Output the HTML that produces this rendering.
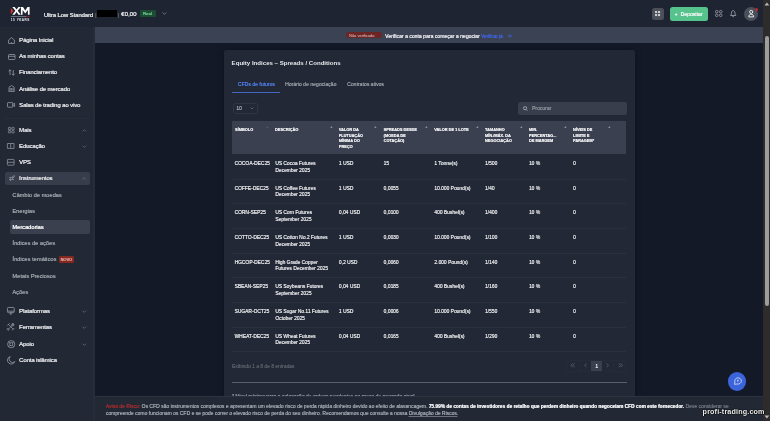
<!DOCTYPE html>
<html><head><meta charset="utf-8">
<style>
*{margin:0;padding:0;box-sizing:border-box}
html,body{width:770px;height:421px;overflow:hidden;background:#131927;font-family:"Liberation Sans",sans-serif;color:#e6e7ea}
.a{position:absolute}
.t{position:absolute;white-space:nowrap;line-height:8px;height:8px}
#hdr{left:0;top:0;width:763px;height:27px;background:#1f2432}
#side{left:0;top:27px;width:95px;height:394px;background:#222834;border-right:2px solid #262c39}
#banner{left:95px;top:27px;width:668px;height:16px;background:#3b4253}
#card{left:224px;top:49.6px;width:411px;height:360px;background:#222835;border-radius:2px;box-shadow:0 0 6px rgba(0,0,0,0.28)}
#foot{left:95px;top:396px;width:668px;height:25px;background:#222834;border-top:1px solid #2c3240}
#sb{left:763px;top:0;width:7px;height:421px;background:#2d2c2a}
.si{font-size:6px;font-weight:normal;letter-spacing:-0.12px;color:#e4e5e8}
.ss{font-size:5.7px;color:#9da2aa}
.hd{font-size:3.9px;font-weight:bold;color:#e9eaed;line-height:5.4px;height:auto}
.td{font-size:4.9px;color:#e2e3e6;line-height:6.6px;height:auto}
.rb{position:absolute;left:232px;width:394px;height:1px;background:#2a303c}
svg{position:absolute;overflow:visible}
body{filter:grayscale(0)}
.t{text-shadow:0.25px 0 0 currentColor}
.si{text-shadow:0.35px 0 0 currentColor}
.hd{text-shadow:0.1px 0 0 currentColor}
</style></head><body>
<div id="hdr" class="a"></div>
<div id="side" class="a"></div>
<div id="banner" class="a"></div>
<div id="card" class="a"></div>

<!-- header content -->
<svg style="left:0;top:0" width="40" height="27" viewBox="0 0 40 27">
  <polygon points="12.3,6.9 14.6,6.9 16.55,9.6 18.5,6.9 20.8,6.9 17.7,10.85 20.8,14.8 18.5,14.8 16.55,12.1 14.6,14.8 12.3,14.8 15.4,10.85" fill="#fff"/>
  <polygon points="20.9,14.8 20.9,6.9 23,6.9 25.25,10.6 27.5,6.9 29.6,6.9 29.6,14.8 27.9,14.8 27.9,9.9 25.25,13.6 22.6,9.9 22.6,14.8" fill="#fff"/>
  <polygon points="10.8,8 13.3,11.1 10.8,14.2" fill="#e8322a"/>
  <rect x="10.8" y="16.1" width="15.2" height="0.6" fill="#a3a7ae"/>
  <rect x="26" y="16.1" width="3.8" height="0.6" fill="#c8292c"/>
  <text x="10.8" y="20.7" font-family="Liberation Sans" font-weight="bold" font-size="3.1" fill="#eceef0" textLength="18.6" lengthAdjust="spacing">15 YEARS</text>
</svg>
<div class="t si" style="left:43.7px;top:10.5px">Ultra Low Standard</div>
<div class="t" style="left:95px;top:10.5px;font-size:5.3px;color:#666b75">|</div>
<div class="a" style="left:97.4px;top:9.5px;width:19.4px;height:7px;background:#000"></div>
<div class="t" style="left:117.5px;top:10.5px;font-size:5.3px;color:#666b75">|</div>
<div class="t" style="left:121px;top:10.3px;font-size:6.2px;color:#e4e5e8">€0,00</div>
<div class="a" style="left:139.8px;top:10.3px;width:15.9px;height:6.4px;background:#1c4d33;border-radius:1.5px"></div>
<div class="t" style="left:143px;top:9.5px;font-size:4.25px;color:#74cf98">Real</div>
<svg style="left:161.8px;top:11.9px" width="5" height="3" viewBox="0 0 5 3"><path d="M0.5 0.5 L2.4 2.3 L4.3 0.5" stroke="#8d929b" stroke-width="0.7" fill="none"/></svg>

<div class="a" style="left:651.8px;top:7.6px;width:12.2px;height:12.5px;background:#4a4f5a;border-radius:2.5px"></div>
<svg style="left:655.2px;top:11px" width="6" height="6" viewBox="0 0 6 6"><rect x="0" y="0" width="2.1" height="2.1" fill="#c9ccd2"/><rect x="3" y="0" width="2.1" height="2.1" fill="#c9ccd2"/><rect x="0" y="3" width="2.1" height="2.1" fill="#c9ccd2"/><rect x="3" y="3" width="2.1" height="2.1" fill="#c9ccd2"/></svg>
<div class="a" style="left:669.5px;top:6.8px;width:38.5px;height:14px;background:#56c28c;border-radius:2.5px"></div>
<div class="t" style="left:674.6px;top:9.6px;font-size:5px;color:#f4fbf7">+</div>
<div class="t" style="left:680.6px;top:9.8px;font-size:5.1px;color:#f4fbf7">Depositar</div>
<svg style="left:715px;top:10px" width="8" height="7" viewBox="0 0 8 7"><circle cx="1.7" cy="1.7" r="1.3" stroke="#a8acb4" stroke-width="0.7" fill="none"/><circle cx="5.7" cy="1.7" r="1.3" stroke="#a8acb4" stroke-width="0.7" fill="none"/><circle cx="1.7" cy="5.3" r="1.3" stroke="#a8acb4" stroke-width="0.7" fill="none"/><circle cx="5.7" cy="5.3" r="1.3" stroke="#a8acb4" stroke-width="0.7" fill="none"/></svg>
<svg style="left:730.2px;top:10.4px" width="7" height="8" viewBox="0 0 7 8"><path d="M0.6 5.5 C1.3 4.8 1.4 4.1 1.4 3.1 C1.4 1.6 2.3 0.6 3.2 0.6 C4.1 0.6 5 1.6 5 3.1 C5 4.1 5.1 4.8 5.8 5.5 Z M2.4 6.4 Q3.2 7.1 4 6.4" stroke="#a3a8b0" stroke-width="0.8" fill="none" stroke-linejoin="round"/></svg>
<div class="a" style="left:744.3px;top:7.1px;width:14px;height:14px;background:#4a505b;border-radius:50%"></div>
<svg style="left:744px;top:7px" width="14" height="14" viewBox="0 0 14 14"><circle cx="7.2" cy="4.9" r="1.55" stroke="#fff" stroke-width="0.85" fill="none"/><path d="M4.8 9.9 C4.8 8.2 5.8 7.3 7.2 7.3 C8.6 7.3 9.6 8.2 9.6 9.9 Z" stroke="#fff" stroke-width="0.85" fill="none" stroke-linejoin="round"/></svg>
<div class="a" style="left:754.6px;top:7.9px;width:3.2px;height:3.2px;background:#c4282b;border-radius:50%"></div>

<!-- scrollbar -->
<div id="sb" class="a"></div>
<svg style="left:764px;top:2px" width="6" height="4" viewBox="0 0 6 4"><polygon points="0.5,3.5 2.9,0.5 5.3,3.5" fill="#b9b9b9"/></svg>
<div class="a" style="left:764.7px;top:36px;width:4.6px;height:270px;background:#9d9d9d;border-radius:2.3px"></div>
<svg style="left:764px;top:415px" width="6" height="4" viewBox="0 0 6 4"><polygon points="0.5,0.5 2.9,3.5 5.3,0.5" fill="#b9b9b9"/></svg>

<!-- sidebar -->
<div class="t si" style="left:19px;top:36px">Página Inicial</div>
<div class="t si" style="left:19px;top:52.2px">As minhas contas</div>
<div class="t si" style="left:19px;top:68.4px">Financiamento</div>
<div class="t si" style="left:19px;top:84.6px">Análise de mercado</div>
<div class="t si" style="left:19px;top:100.8px">Salas de trading ao vivo</div>
<div class="a" style="left:5px;top:118.4px;width:85px;height:0.6px;background:#272d39"></div>
<div class="t si" style="left:19px;top:125.6px">Mais</div>
<div class="t si" style="left:19px;top:141.9px">Educação</div>
<div class="t si" style="left:19px;top:158.2px">VPS</div>
<div class="a" style="left:4.5px;top:171.8px;width:85.8px;height:13px;background:#373d4a;border-radius:2px"></div>
<div class="t si" style="left:19px;top:174.4px">Instrumentos</div>
<div class="t ss" style="left:12.3px;top:190.6px">Câmbio de moedas</div>
<div class="t ss" style="left:12.3px;top:206.9px">Energias</div>
<div class="a" style="left:9.7px;top:220.4px;width:80.5px;height:13.4px;background:#3a404d;border-radius:2px"></div>
<div class="t ss" style="left:12.3px;top:223px;color:#fff">Mercadorias</div>
<div class="t ss" style="left:12.3px;top:239.1px">Índices de ações</div>
<div class="t ss" style="left:12.3px;top:255.4px">Índices temáticos</div>
<div class="a" style="left:58.5px;top:256.2px;width:15.6px;height:6.6px;background:#842821;border-radius:1.5px"></div>
<div class="t" style="left:60.5px;top:255.6px;font-size:3.95px;color:#eab8b0">NOVO</div>
<div class="t ss" style="left:12.3px;top:271.8px">Metais Preciosos</div>
<div class="t ss" style="left:12.3px;top:288.1px">Ações</div>
<div class="t si" style="left:19px;top:307.2px">Plataformas</div>
<div class="t si" style="left:19px;top:323px">Ferramentas</div>
<div class="t si" style="left:19px;top:339.7px">Apoio</div>
<div class="t si" style="left:19px;top:355.9px">Conta islâmica</div>

<!-- sidebar icons -->
<svg style="left:7.5px;top:37px" width="8" height="7" viewBox="0 0 8 7" fill="none" stroke="#9ca1aa" stroke-width="0.75"><path d="M0.6 3 L3.5 0.6 L6.4 3 V6.4 H0.6 Z M2.6 6.4 Q3.5 4.8 4.4 6.4"/></svg>
<svg style="left:7.5px;top:53.5px" width="8" height="6" viewBox="0 0 8 6" fill="none" stroke="#9ca1aa" stroke-width="0.75"><rect x="0.5" y="0.5" width="6.5" height="5" rx="0.8"/><path d="M0.5 2.3 H7"/></svg>
<svg style="left:7.5px;top:69px" width="8" height="7" viewBox="0 0 8 7" fill="none" stroke="#9ca1aa" stroke-width="0.75"><path d="M2 6 V0.8 M0.6 2.2 L2 0.8 L3.4 2.2 M5.3 1 V6.2 M3.9 4.8 L5.3 6.2 L6.7 4.8"/></svg>
<svg style="left:7.5px;top:85px" width="8" height="7" viewBox="0 0 8 7" fill="none" stroke="#9ca1aa" stroke-width="0.75"><path d="M0.6 6.4 H6.6 M1 6.4 V2.2 L3.6 0.6 L6.2 2.2 V6.4 M2.2 3 V5.6 M3.6 3 V5.6 M5 3 V5.6"/></svg>
<svg style="left:7px;top:102px" width="9" height="6" viewBox="0 0 9 6" fill="none" stroke="#9ca1aa" stroke-width="0.75"><rect x="0.5" y="0.6" width="5.2" height="4.6" rx="0.6"/><path d="M5.7 2.4 L7.6 1.3 V4.5 L5.7 3.4"/></svg>
<svg style="left:7.6px;top:126.5px" width="7" height="7" viewBox="0 0 7 7" fill="none" stroke="#9ca1aa" stroke-width="0.7"><rect x="0.4" y="0.4" width="2.4" height="2.3" rx="0.6"/><rect x="3.8" y="0.4" width="2.4" height="2.3" rx="0.6"/><rect x="0.4" y="3.6" width="2.4" height="2.3" rx="0.6"/><rect x="3.8" y="3.6" width="2.4" height="2.3" rx="0.6"/></svg>
<svg style="left:7px;top:143.2px" width="8" height="7" viewBox="0 0 8 7" fill="none" stroke="#9ca1aa" stroke-width="0.7"><path d="M0.4 0.5 H3.7 V5.4 H0.4 Z M3.7 0.5 H7 V5.4 H3.7"/></svg>
<svg style="left:7px;top:159px" width="8" height="7" viewBox="0 0 8 7" fill="none" stroke="#9ca1aa" stroke-width="0.7"><rect x="0.4" y="0.4" width="6.7" height="5.8" rx="0.6"/><path d="M0.4 3.3 H7.1"/></svg>
<svg style="left:7.6px;top:175px" width="8" height="8" viewBox="0 0 8 8" fill="none" stroke="#9ca1aa" stroke-width="0.7"><path d="M1.2 2.6 H5.6 M4.2 1.2 L5.6 2.6 L4.2 4 M6 4.6 H1.6 M3 6 L1.6 4.6 L3 3.2"/><path d="M6.2 0.4 V1.8 M5.5 1.1 H6.9"/></svg>
<svg style="left:7px;top:307.3px" width="9" height="8" viewBox="0 0 9 8" fill="none" stroke="#9ca1aa" stroke-width="0.75"><rect x="0.45" y="0.45" width="6.8" height="5.2" rx="1"/><path d="M0.6 4.2 H7.1 M2.6 7 H5.1 M3.85 5.7 V7"/></svg>
<svg style="left:7px;top:323.2px" width="9" height="9" viewBox="0 0 9 9" fill="none" stroke="#9ca1aa" stroke-width="0.7" stroke-linecap="round"><path d="M1.4 1.4 L6.2 6.2 M0.5 2.3 L2.3 0.5 M5.3 7.1 L7.1 5.3 M6.2 0.6 A1.2 1.2 0 1 0 6.9 1.3 L6 1.9 L5.6 1.5 Z M5.2 2.4 L1.6 6 M1.1 5.5 L2.1 6.5 L1 7.4 L0.2 6.6 Z"/></svg>
<svg style="left:6.8px;top:339.5px" width="9" height="9" viewBox="0 0 9 9" fill="none" stroke="#9ca1aa" stroke-width="0.75"><circle cx="4.2" cy="4.2" r="3.6"/><circle cx="4.2" cy="4.2" r="1.6"/><path d="M1.8 1.8 L3 3 M6.6 1.8 L5.4 3 M1.8 6.6 L3 5.4 M6.6 6.6 L5.4 5.4"/></svg>
<svg style="left:6.8px;top:356px" width="9" height="9" viewBox="0 0 9 9" fill="none" stroke="#9ca1aa" stroke-width="0.75"><path d="M3.2 0.6 A3.8 3.8 0 1 0 7.8 5.6 A3.2 3.2 0 0 1 3.2 0.6 Z"/></svg>

<!-- chevrons -->
<svg style="left:81.5px;top:128.6px" width="5" height="3" viewBox="0 0 5 3"><path d="M0.6 2.4 L2.3 0.7 L4 2.4" stroke="#7b808a" stroke-width="0.6" fill="none"/></svg>
<svg style="left:81.5px;top:144.8px" width="5" height="3" viewBox="0 0 5 3"><path d="M0.6 0.7 L2.3 2.4 L4 0.7" stroke="#7b808a" stroke-width="0.6" fill="none"/></svg>
<svg style="left:81.5px;top:177.3px" width="5" height="3" viewBox="0 0 5 3"><path d="M0.6 2.4 L2.3 0.7 L4 2.4" stroke="#7b808a" stroke-width="0.6" fill="none"/></svg>
<svg style="left:81.5px;top:310px" width="5" height="3" viewBox="0 0 5 3"><path d="M0.6 0.7 L2.3 2.4 L4 0.7" stroke="#7b808a" stroke-width="0.6" fill="none"/></svg>
<svg style="left:81.5px;top:325.8px" width="5" height="3" viewBox="0 0 5 3"><path d="M0.6 0.7 L2.3 2.4 L4 0.7" stroke="#7b808a" stroke-width="0.6" fill="none"/></svg>
<svg style="left:81.5px;top:342.5px" width="5" height="3" viewBox="0 0 5 3"><path d="M0.6 0.7 L2.3 2.4 L4 0.7" stroke="#7b808a" stroke-width="0.6" fill="none"/></svg>

<!-- banner -->
<div class="a" style="left:345.8px;top:32.1px;width:35.8px;height:6.1px;background:#6c2524;border-radius:3px"></div>
<div class="t" style="left:349px;top:31.5px;font-size:4px;color:#e2c3c2;text-shadow:none">Não verificado</div>
<div class="t" style="left:385px;top:32px;font-size:5.12px;color:#eceef1;text-shadow:0.3px 0 0 currentColor">Verificar a conta para começar a negociar</div>
<div class="t" style="left:481px;top:32.6px;font-size:4.65px;color:#3f66e6;text-shadow:0.2px 0 0 currentColor">Verificar já</div>
<svg style="left:506.6px;top:33.9px" width="5" height="4" viewBox="0 0 5 4"><path d="M0.3 2 H4.3 M2.6 0.4 L4.3 2 L2.6 3.6" stroke="#3f66e6" stroke-width="0.75" fill="none"/></svg>

<!-- card content -->
<div class="t" style="left:231.6px;top:59.4px;font-size:6.1px;font-weight:bold;color:#e6e8ec;text-shadow:none">Equity Indices – Spreads / Conditions</div>
<div class="t" style="left:237.8px;top:79.7px;font-size:5.1px;color:#4f7fe8">CFDs de futuros</div>
<div class="t" style="left:285px;top:79.7px;font-size:5.1px;color:#9a9fa7">Horário de negociação</div>
<div class="t" style="left:347.1px;top:79.7px;font-size:5.1px;color:#9a9fa7">Contratos ativos</div>
<div class="a" style="left:232px;top:92.3px;width:48.2px;height:1.1px;background:#4467c0"></div>

<div class="a" style="left:232.5px;top:102.5px;width:25.8px;height:11.7px;border:0.7px solid #2f3541;border-radius:2px"></div>
<div class="t" style="left:236.3px;top:105.2px;font-size:4.9px;color:#a7abb3">10</div>
<svg style="left:250px;top:107.3px" width="4" height="3" viewBox="0 0 4 3"><path d="M0.4 0.5 L1.9 2 L3.4 0.5" stroke="#8a8f98" stroke-width="0.55" fill="none"/></svg>

<div class="a" style="left:518.1px;top:102px;width:108.5px;height:12.9px;background:#383e4b;border-radius:2.5px"></div>
<svg style="left:522.5px;top:105.5px" width="5" height="6" viewBox="0 0 5 6"><circle cx="2.1" cy="2.2" r="1.6" stroke="#c0c3c9" stroke-width="0.7" fill="none"/><path d="M3.2 3.4 L4.4 4.7" stroke="#c0c3c9" stroke-width="0.7"/></svg>
<div class="t" style="left:532px;top:104.4px;font-size:5px;color:#8f949c">Procurar</div>

<!-- table header -->
<div class="a" style="left:232px;top:121.2px;width:394.4px;height:32.8px;background:#3a404f"></div>
<div class="t hd" style="left:235px;top:127.4px">SÍMBOLO</div>
<div class="t hd" style="left:275px;top:127.4px">DESCRIÇÃO</div>
<div class="t hd" style="left:338.8px;top:127.4px">VALOR DA<br>FLUTUAÇÃO<br>MÍNIMA DO<br>PREÇO</div>
<div class="t hd" style="left:383.6px;top:127.4px">SPREADS DESDE<br>(MOEDA DE<br>COTAÇÃO)</div>
<div class="t hd" style="left:434.2px;top:127.4px">VALOR DE 1 LOTE</div>
<div class="t hd" style="left:485px;top:127.4px">TAMANHO<br>MÍN./MÁX. DA<br>NEGOCIAÇÃO</div>
<div class="t hd" style="left:529px;top:127.4px">MIN.<br>PERCENTAG...<br>DE MARGEM</div>
<div class="t hd" style="left:573px;top:127.4px">NÍVEIS DE<br>LIMITE E<br>PARAGEM*</div>
<svg style="left:265.5px;top:126px" width="3" height="2" viewBox="0 0 3 2"><polygon points="0.2,1.8 1.4,0.3 2.6,1.8" fill="#5a606c"/></svg>
<svg style="left:329.7px;top:126px" width="3" height="2" viewBox="0 0 3 2"><polygon points="0.2,1.8 1.4,0.3 2.6,1.8" fill="#a4a8b0"/></svg>
<svg style="left:374px;top:126px" width="3" height="2" viewBox="0 0 3 2"><polygon points="0.2,1.8 1.4,0.3 2.6,1.8" fill="#a4a8b0"/></svg>
<svg style="left:424.6px;top:126px" width="3" height="2" viewBox="0 0 3 2"><polygon points="0.2,1.8 1.4,0.3 2.6,1.8" fill="#a4a8b0"/></svg>
<svg style="left:475.9px;top:126px" width="3" height="2" viewBox="0 0 3 2"><polygon points="0.2,1.8 1.4,0.3 2.6,1.8" fill="#a4a8b0"/></svg>
<svg style="left:519.7px;top:126px" width="3" height="2" viewBox="0 0 3 2"><polygon points="0.2,1.8 1.4,0.3 2.6,1.8" fill="#a4a8b0"/></svg>
<svg style="left:563.8px;top:126px" width="3" height="2" viewBox="0 0 3 2"><polygon points="0.2,1.8 1.4,0.3 2.6,1.8" fill="#a4a8b0"/></svg>
<svg style="left:607.7px;top:126px" width="3" height="2" viewBox="0 0 3 2"><polygon points="0.2,1.8 1.4,0.3 2.6,1.8" fill="#a4a8b0"/></svg>

<!-- rows -->
<div id="rows"></div>
<div class="t td" style="left:234.5px;top:161.15px">COCOA-DEC25</div>
<div class="t td" style="left:275.2px;top:161.15px">US Cocoa Futures<br>December 2025</div>
<div class="t td" style="left:338.8px;top:161.15px">1 USD</div>
<div class="t td" style="left:383.6px;top:161.15px">15</div>
<div class="t td" style="left:434.3px;top:161.15px">1 Tonne(s)</div>
<div class="t td" style="left:484.9px;top:161.15px">1/500</div>
<div class="t td" style="left:528.9px;top:161.15px">10 %</div>
<div class="t td" style="left:572.9px;top:161.15px">0</div>
<div class="rb" style="top:178.75px"></div>
<div class="t td" style="left:234.5px;top:185.80px">COFFE-DEC25</div>
<div class="t td" style="left:275.2px;top:185.80px">US Coffee Futures<br>December 2025</div>
<div class="t td" style="left:338.8px;top:185.80px">1 USD</div>
<div class="t td" style="left:383.6px;top:185.80px">0,0055</div>
<div class="t td" style="left:434.3px;top:185.80px">10.000 Pound(s)</div>
<div class="t td" style="left:484.9px;top:185.80px">1/40</div>
<div class="t td" style="left:528.9px;top:185.80px">10 %</div>
<div class="t td" style="left:572.9px;top:185.80px">0</div>
<div class="rb" style="top:203.40px"></div>
<div class="t td" style="left:234.5px;top:210.45px">CORN-SEP25</div>
<div class="t td" style="left:275.2px;top:210.45px">US Corn Futures<br>September 2025</div>
<div class="t td" style="left:338.8px;top:210.45px">0,04 USD</div>
<div class="t td" style="left:383.6px;top:210.45px">0,0100</div>
<div class="t td" style="left:434.3px;top:210.45px">400 Bushel(s)</div>
<div class="t td" style="left:484.9px;top:210.45px">1/400</div>
<div class="t td" style="left:528.9px;top:210.45px">10 %</div>
<div class="t td" style="left:572.9px;top:210.45px">0</div>
<div class="rb" style="top:228.05px"></div>
<div class="t td" style="left:234.5px;top:235.10px">COTTO-DEC25</div>
<div class="t td" style="left:275.2px;top:235.10px">US Cotton No.2 Futures<br>December 2025</div>
<div class="t td" style="left:338.8px;top:235.10px">1 USD</div>
<div class="t td" style="left:383.6px;top:235.10px">0,0030</div>
<div class="t td" style="left:434.3px;top:235.10px">10.000 Pound(s)</div>
<div class="t td" style="left:484.9px;top:235.10px">1/100</div>
<div class="t td" style="left:528.9px;top:235.10px">10 %</div>
<div class="t td" style="left:572.9px;top:235.10px">0</div>
<div class="rb" style="top:252.70px"></div>
<div class="t td" style="left:234.5px;top:259.75px">HGCOP-DEC25</div>
<div class="t td" style="left:275.2px;top:259.75px">High Grade Copper<br>Futures December 2025</div>
<div class="t td" style="left:338.8px;top:259.75px">0,2 USD</div>
<div class="t td" style="left:383.6px;top:259.75px">0,0060</div>
<div class="t td" style="left:434.3px;top:259.75px">2.000 Pound(s)</div>
<div class="t td" style="left:484.9px;top:259.75px">1/140</div>
<div class="t td" style="left:528.9px;top:259.75px">10 %</div>
<div class="t td" style="left:572.9px;top:259.75px">0</div>
<div class="rb" style="top:277.35px"></div>
<div class="t td" style="left:234.5px;top:284.40px">SBEAN-SEP25</div>
<div class="t td" style="left:275.2px;top:284.40px">US Soybeans Futures<br>September 2025</div>
<div class="t td" style="left:338.8px;top:284.40px">0,04 USD</div>
<div class="t td" style="left:383.6px;top:284.40px">0,0185</div>
<div class="t td" style="left:434.3px;top:284.40px">400 Bushel(s)</div>
<div class="t td" style="left:484.9px;top:284.40px">1/160</div>
<div class="t td" style="left:528.9px;top:284.40px">10 %</div>
<div class="t td" style="left:572.9px;top:284.40px">0</div>
<div class="rb" style="top:302.00px"></div>
<div class="t td" style="left:234.5px;top:309.05px">SUGAR-OCT25</div>
<div class="t td" style="left:275.2px;top:309.05px">US Sugar No.11 Futures<br>October 2025</div>
<div class="t td" style="left:338.8px;top:309.05px">1 USD</div>
<div class="t td" style="left:383.6px;top:309.05px">0,0006</div>
<div class="t td" style="left:434.3px;top:309.05px">10.000 Pound(s)</div>
<div class="t td" style="left:484.9px;top:309.05px">1/550</div>
<div class="t td" style="left:528.9px;top:309.05px">10 %</div>
<div class="t td" style="left:572.9px;top:309.05px">0</div>
<div class="rb" style="top:326.65px"></div>
<div class="t td" style="left:234.5px;top:333.70px">WHEAT-DEC25</div>
<div class="t td" style="left:275.2px;top:333.70px">US Wheat Futures<br>December 2025</div>
<div class="t td" style="left:338.8px;top:333.70px">0,04 USD</div>
<div class="t td" style="left:383.6px;top:333.70px">0,0165</div>
<div class="t td" style="left:434.3px;top:333.70px">400 Bushel(s)</div>
<div class="t td" style="left:484.9px;top:333.70px">1/290</div>
<div class="t td" style="left:528.9px;top:333.70px">10 %</div>
<div class="t td" style="left:572.9px;top:333.70px">0</div>
<div class="rb" style="top:351.30px"></div>

<div class="t" style="left:232px;top:363.1px;font-size:4.9px;color:#5a606a">Exibindo 1 a 8 de 8 entradas</div>

<!-- pagination -->
<div class="a" style="left:566px;top:360.4px;width:60px;height:11.5px;border:0.6px solid #262c37;border-radius:1px"></div>
<div class="a" style="left:579px;top:360.4px;width:0.5px;height:11.5px;background:#262c37"></div>
<div class="a" style="left:613px;top:360.4px;width:0.5px;height:11.5px;background:#262c37"></div>
<div class="a" style="left:591.2px;top:361.2px;width:10.6px;height:9.8px;background:#3a404d"></div>
<svg style="left:570px;top:363.4px" width="6" height="5" viewBox="0 0 6 5" fill="none" stroke="#5b616c" stroke-width="0.8"><path d="M2.6 0.4 L0.8 2.3 L2.6 4.2 M4.6 0.4 L2.8 2.3 L4.6 4.2"/></svg>
<svg style="left:584px;top:363.4px" width="4" height="5" viewBox="0 0 4 5" fill="none" stroke="#5b616c" stroke-width="0.8"><path d="M2.4 0.4 L0.6 2.3 L2.4 4.2"/></svg>
<div class="t" style="left:595.2px;top:361.7px;font-size:5px;color:#e4e6ea">1</div>
<svg style="left:606.3px;top:363.4px" width="4" height="5" viewBox="0 0 4 5" fill="none" stroke="#5b616c" stroke-width="0.8"><path d="M0.6 0.4 L2.4 2.3 L0.6 4.2"/></svg>
<svg style="left:617.5px;top:363.4px" width="6" height="5" viewBox="0 0 6 5" fill="none" stroke="#5b616c" stroke-width="0.8"><path d="M0.8 0.4 L2.6 2.3 L0.8 4.2 M2.8 0.4 L4.6 2.3 L2.8 4.2"/></svg>

<div class="a" style="left:232px;top:381.8px;width:395px;height:0.9px;background:#5a5f69"></div>
<div class="t" style="left:232px;top:392.3px;font-size:5.04px;color:#959aa2">* Nível mínimo para a colocação de ordens pendentes ao preço de mercado atual</div>

<!-- chat button -->
<div class="a" style="left:727.6px;top:372.1px;width:18.6px;height:18.6px;background:#3b63da;border-radius:50%"></div>
<svg style="left:733.6px;top:378.4px" width="9" height="8" viewBox="0 0 9 8" fill="none" stroke="#eef1fb" stroke-width="0.75" stroke-linejoin="round"><path d="M0.5 6.3 L0.9 3.9 A3.3 3.1 0 1 1 3.4 6 Z"/><path d="M3.7 1.5 V3.4 L4.7 2.7"/></svg>

<!-- footer -->
<div id="foot" class="a"></div>
<div class="t" style="left:105.8px;top:401.8px;font-size:5px;color:#a1a6ae"><span style="color:#a52c2f">Aviso de Risco:</span> Os CFD são instrumentos complexos e apresentam um elevado risco de perda rápida dinheiro devido ao efeito de alavancagem. <b style="color:#eef0f2;font-size:4.8px">75.99% de contas de investidores de retalho que perdem dinheiro quando negoceiam CFD com este fornecedor.</b> <span style="color:#6f7580">Deve considerar se</span></div>
<div class="t" style="left:105.8px;top:408.8px;font-size:5px;color:#a1a6ae">compreende como funcionam os CFD e se pode correr o elevado risco de perda do seu dinheiro. Recomendamos que consulte a nossa <u style="text-decoration-color:#6a707a">Divulgação de Riscos</u>.</div>

<div class="t" style="left:702.6px;top:407.6px;font-size:7.2px;line-height:8px;font-weight:bold;color:#ececec;letter-spacing:0.15px;text-shadow:0 0 1px #000,0 0 1px #000,0.4px 0.4px 0.8px #000">profi-trading.com</div>
</body></html>
